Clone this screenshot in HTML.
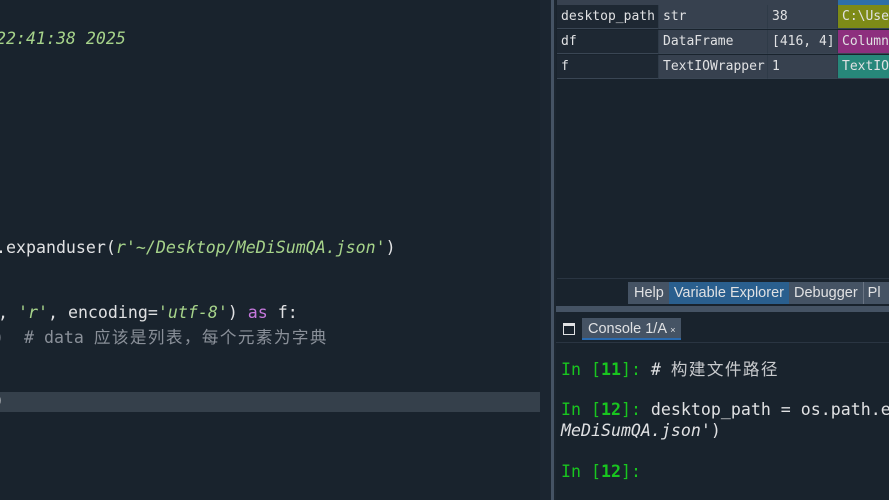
<!DOCTYPE html>
<html><head><meta charset="utf-8"><style>
body{margin:0;width:889px;height:500px;overflow:hidden;background:#19232d;position:relative;font-family:"DejaVu Sans Mono","Liberation Mono","Noto Sans CJK SC",monospace}
.a{position:absolute;white-space:pre}
.code{font-size:16.6px;color:#e0e1e3}
.g{color:#a6d38a;font-style:italic}
.c{color:#8a9099}
.k{color:#c678dd}
.cj{letter-spacing:1.4px}
.tbl{position:absolute;left:557px;font-size:13px;color:#e0e1e3}
.cell{position:absolute;height:24px;line-height:24px;padding-left:4px;box-sizing:border-box;border-right:1px solid #2f3b48;border-bottom:1px solid #3a4654;overflow:hidden;white-space:pre}
.sans{font-family:"Liberation Sans","DejaVu Sans",sans-serif}
.grn{color:#19c51f}
.tabs{display:flex}
.tabs div{padding:0 5px;white-space:nowrap}
</style></head><body>
<!-- editor -->
<div class="a code g" style="left:-4px;top:29px">22:41:38 2025</div>
<div class="a code" style="left:-4px;top:238px">.expanduser(<span class="g">r'~/Desktop/MeDiSumQA.json</span><span class="g" style="font-style:normal">'</span>)</div>
<div class="a code" style="left:-2px;top:303px">, <span class="g">'r'</span>, encoding=<span class="g">'utf-8'</span>) <span class="k">as</span> f:</div>
<div class="a code c" style="left:-6px;top:324px">)  # data <span class="cj">应该是列表，每个元素为字典</span></div>
<div class="a" style="left:0;top:392px;width:540px;height:20px;background:#35404b"></div>
<div class="a code" style="left:-6px;top:391px">)</div>
<div class="a" style="left:540px;top:0;width:11px;height:500px;background:#1b2530"></div>
<div class="a" style="left:551px;top:0;width:3px;height:500px;background:#455364"></div>
<div class="a" style="left:554px;top:0;width:2px;height:500px;background:#1c2630"></div>
<!-- var table -->
<div class="a" style="left:557px;top:0;width:332px;height:278px;background:#19232d;border-bottom:1px solid #2a3542"></div>
<div class="a" style="left:838px;top:0;width:51px;height:5px;background:#2e6fa8"></div>
<div class="a" style="left:557px;top:0;width:281px;height:5px;background:#37414f"></div>
<div class="tbl" style="top:5px">
<div class="cell" style="left:0;top:0;width:102px;background:#1e2833">desktop_path</div>
<div class="cell" style="left:102px;top:0;width:109px;background:#37414f">str</div>
<div class="cell" style="left:211px;top:0;width:70px;background:#37414f">38</div>
<div class="cell" style="left:281px;top:0;width:60px;background:#7d8a17">C:\User</div>
<div class="cell" style="left:0;top:25px;width:102px;background:#1e2833">df</div>
<div class="cell" style="left:102px;top:25px;width:109px;background:#37414f">DataFrame</div>
<div class="cell" style="left:211px;top:25px;width:70px;background:#37414f">[416, 4]</div>
<div class="cell" style="left:281px;top:25px;width:60px;background:#8d2f7e">Column</div>
<div class="cell" style="left:0;top:50px;width:102px;background:#1e2833">f</div>
<div class="cell" style="left:102px;top:50px;width:109px;background:#37414f">TextIOWrapper</div>
<div class="cell" style="left:211px;top:50px;width:70px;background:#37414f">1</div>
<div class="cell" style="left:281px;top:50px;width:60px;background:#27877a">TextIO</div>
</div>
<!-- tabs -->
<div class="a sans tabs" style="left:628px;top:282px;width:261px;height:22px;line-height:22px;font-size:14.5px;color:#e0e1e3;background:#455364;overflow:hidden">
<div style="padding-left:6px">Help</div><div style="background:#2a5f8e">Variable Explorer</div><div>Debugger</div><div style="border-left:1px solid #6a7584;padding-left:4px">Pl</div></div>
<div class="a" style="left:556px;top:306px;width:333px;height:6px;background:#455364"></div>
<!-- console -->
<div class="a" style="left:563px;top:323px;width:10px;height:8px;border:1.5px solid #e0e1e3;border-top-width:3px"></div>
<div class="a sans" style="left:582px;top:318px;width:99px;height:22px;line-height:22px;background:#455364;border-bottom:2px solid #2a6bb0;color:#e0e1e3;font-size:14.5px;padding-left:6px;box-sizing:border-box">Console 1/A <span style="font-size:9px">×</span></div>
<div class="a" style="left:556px;top:342px;width:333px;height:1px;background:#2a3542"></div>
<div class="a code" style="left:561px;top:356px"><span class="grn">In [<b>11</b>]:</span> # <span class="cj" style="color:#c8cacd">构建文件路径</span></div>
<div class="a code" style="left:561px;top:400px"><span class="grn">In [<b>12</b>]:</span> desktop_path = os.path.e</div>
<div class="a code" style="left:561px;top:421px"><span style="font-style:italic">MeDiSumQA.json</span>')</div>
<div class="a code" style="left:561px;top:462px"><span class="grn">In [<b>12</b>]:</span></div>
</body></html>
